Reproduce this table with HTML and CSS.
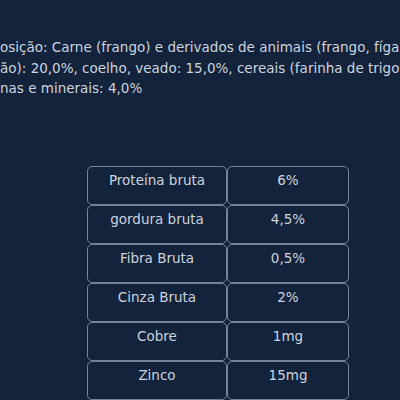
FILE: index.html
```html
<!DOCTYPE html>
<html lang="pt">
<head>
<meta charset="utf-8">
<link rel="stylesheet" href="styles.css">
</head>
<body>
<div class="page">
  <p class="composition">
    <span class="line">osição: Carne (frango) e derivados de animais (frango, fígado)</span>
    <span class="line">ão): 20,0%, coelho, veado: 15,0%, cereais (farinha de trigo): 5,0%</span>
    <span class="line">nas e minerais: 4,0%</span>
  </p>
  <table class="nutri">
    <tr><td>Proteína bruta</td><td>6%</td></tr>
    <tr><td>gordura bruta</td><td>4,5%</td></tr>
    <tr><td>Fibra Bruta</td><td>0,5%</td></tr>
    <tr><td>Cinza Bruta</td><td>2%</td></tr>
    <tr><td>Cobre</td><td>1mg</td></tr>
    <tr><td>Zinco</td><td>15mg</td></tr>
    <tr><td>&nbsp;</td><td>&nbsp;</td></tr>
  </table>
</div>
</body>
</html>
```
FILE: styles.css
```css
html, body {
  margin: 0;
  padding: 0;
  background: #13233b;
  overflow: hidden;
}
.page {
  width: 400px;
  height: 400px;
  overflow: hidden;
  font-family: "DejaVu Sans", sans-serif;
  color: #cdd4df;
  font-size: 13.5px;
}
.composition {
  margin: 0;
  padding-top: 37px;
  line-height: 20.5px;
}
.line {
  display: block;
  white-space: nowrap;
}
.nutri {
  margin: 67px 0 0 87px;
  border-collapse: separate;
  border-spacing: 0;
}
.nutri td {
  border: 1px solid #75849a;
  border-radius: 5px;
  text-align: center;
  vertical-align: top;
  padding: 3px 0 0 0;
  box-sizing: border-box;
  height: 39px;
  line-height: 20px;
}
.nutri td:first-child { width: 140px; }
.nutri td:last-child { width: 122px; }
```
